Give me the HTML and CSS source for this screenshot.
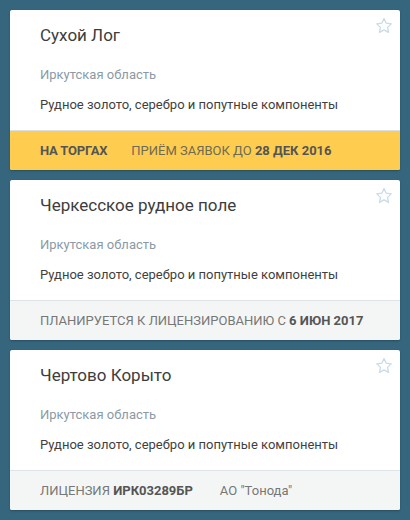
FILE: index.html
```html
<!DOCTYPE html>
<html lang="ru">
<head>
<meta charset="utf-8">
<link rel="stylesheet" href="styles.css">
</head>
<body>
<div class="list">
  <div class="card">
    <div class="card-body">
      <svg class="star" viewBox="0 0 20 20" width="18" height="18"><path d="M10 1.8l2.45 5.1 5.6.7-4.1 3.9 1.05 5.55L10 14.35l-5 2.7 1.05-5.55-4.1-3.9 5.6-.7z" fill="none" stroke="#c7dbea" stroke-width="1.4" stroke-linejoin="round"/></svg>
      <div class="title">Сухой Лог</div>
      <div class="region">Иркутская область</div>
      <div class="minerals">Рудное золото, серебро и попутные компоненты</div>
    </div>
    <div class="footer footer-yellow">
      <span class="status">НА ТОРГАХ</span>
      <span>ПРИЁМ ЗАЯВОК ДО <b>28 ДЕК 2016</b></span>
    </div>
  </div>
  <div class="card">
    <div class="card-body">
      <svg class="star" viewBox="0 0 20 20" width="18" height="18"><path d="M10 1.8l2.45 5.1 5.6.7-4.1 3.9 1.05 5.55L10 14.35l-5 2.7 1.05-5.55-4.1-3.9 5.6-.7z" fill="none" stroke="#c7dbea" stroke-width="1.4" stroke-linejoin="round"/></svg>
      <div class="title">Черкесское рудное поле</div>
      <div class="region">Иркутская область</div>
      <div class="minerals">Рудное золото, серебро и попутные компоненты</div>
    </div>
    <div class="footer">
      <span>ПЛАНИРУЕТСЯ К ЛИЦЕНЗИРОВАНИЮ С <b>6 ИЮН 2017</b></span>
    </div>
  </div>
  <div class="card">
    <div class="card-body">
      <svg class="star" viewBox="0 0 20 20" width="18" height="18"><path d="M10 1.8l2.45 5.1 5.6.7-4.1 3.9 1.05 5.55L10 14.35l-5 2.7 1.05-5.55-4.1-3.9 5.6-.7z" fill="none" stroke="#c7dbea" stroke-width="1.4" stroke-linejoin="round"/></svg>
      <div class="title">Чертово Корыто</div>
      <div class="region">Иркутская область</div>
      <div class="minerals">Рудное золото, серебро и попутные компоненты</div>
    </div>
    <div class="footer">
      <span>ЛИЦЕНЗИЯ <b>ИРК03289БР</b></span>
      <span class="owner">АО "Тонода"</span>
    </div>
  </div>
</div>
</body>
</html>
```
FILE: styles.css
```css
html, body {
  margin: 0;
  padding: 0;
  background: #35667e;
}
body {
  font-family: Roboto, "Noto Sans", sans-serif;
  width: 410px;
  height: 520px;
  overflow: hidden;
}
.list {
  padding: 10px;
  display: flex;
  flex-direction: column;
  gap: 10px;
}
.card {
  background: #fff;
  border-radius: 2px;
  height: 160px;
  display: flex;
  flex-direction: column;
  overflow: hidden;
  box-shadow: 0 1px 2px rgba(0, 0, 0, 0.25);
}
.card-body {
  position: relative;
  flex: 1;
  padding: 13px 30px 0;
}
.star {
  position: absolute;
  top: 7px;
  right: 7px;
}
.title {
  font-size: 17px;
  font-weight: 400;
  line-height: 24px;
  color: #3d3d3d;
  margin-bottom: 18px;
}
.region {
  font-size: 13px;
  line-height: 20px;
  color: #8b9aa6;
  margin-bottom: 10px;
}
.minerals {
  font-size: 13px;
  line-height: 20px;
  color: #3f3f3f;
}
.footer {
  height: 40px;
  box-sizing: border-box;
  border-top: 1px solid #dde3e6;
  background: #f4f6f6;
  padding: 0 30px;
  display: flex;
  align-items: center;
  gap: 24px;
  font-size: 13px;
  color: #777;
}
.footer b {
  color: #555;
  font-weight: 700;
}
.footer-yellow {
  background: #fecd4f;
  border-top-color: #d9dfe2;
  color: #6f6a55;
}
.footer-yellow .status {
  font-weight: 700;
  color: #555;
  letter-spacing: -0.2px;
}
.owner {
  margin-left: 3px;
}
```
